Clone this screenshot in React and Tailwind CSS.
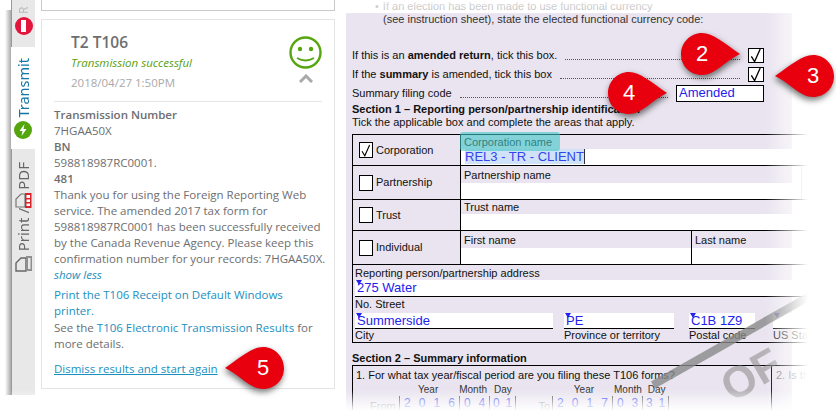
const sans = "font-['Open_Sans',sans-serif]"

function Callout({ n, flip, className }) {
  return (
    <div className={`absolute w-[62px] h-[50px] ${className}`}>
      <svg width="62" height="50" viewBox="0 0 62 50" className={`absolute inset-0 overflow-visible drop-shadow-[1px_3px_3px_rgba(0,0,0,0.55)] ${flip ? '-scale-x-100' : ''}`}>
        <path d="M22 3C33 3 44 13 60 24 C45 31 35 45 22 45 C10 45 1 36 1 24 C1 13 10 3 22 3Z" fill="#e8000f" />
      </svg>
      <span className={`absolute top-[10px] w-[44px] text-center text-[22px] leading-[28px] text-white font-['Liberation_Sans',sans-serif] ${flip ? 'left-[18px]' : 'left-0'}`}>{n}</span>
    </div>
  )
}

function Tick({ className }) {
  return (
    <div className={`border border-black bg-white flex items-center justify-center ${className}`}>
      <svg width="15" height="15" viewBox="0 0 15 15">
        <path d="M2.5 8.5 L6 14 L12 0.5" fill="none" stroke="#000" strokeWidth="1.4" />
      </svg>
    </div>
  )
}

function Marker() {
  return <span className="absolute left-[1px] top-0 border-x-[3px] border-t-[5px] border-x-transparent border-t-[#2222ee]" />
}

function EntityRow({ label, checked, h, children }) {
  return (
    <div className={`flex border-b border-black ${h}`}>
      <div className="w-[108px] shrink-0 flex items-center pl-[6px] gap-[3px] border-r border-black">
        {checked
          ? <Tick className="w-[14px] h-[16px]" />
          : <div className="w-[14px] h-[16px] border border-black bg-white" />}
        <span className="text-[11px] leading-none">{label}</span>
      </div>
      {children}
    </div>
  )
}

function NameCell({ label, labelClass, className = '' }) {
  return (
    <div className={`flex flex-col ${className}`}>
      <div className={`text-[11px] leading-[13px] pl-[3px] ${labelClass}`}>{label}</div>
      <div className="flex-1 bg-white" />
    </div>
  )
}

function Dots() {
  return <span className="flex-1 border-b border-dotted border-[#555] h-[9px]" />
}

function Field({ value, label, w, className = '' }) {
  return (
    <div className={`flex flex-col shrink-0 ${w} ${className}`}>
      <div className="relative h-[16px] bg-white border-b border-black text-[#2222ee] text-[13px] leading-[15px] pl-[2px]">
        <Marker />{value}
      </div>
      <div className="text-[11px] leading-[13px]">{label}</div>
    </div>
  )
}

function DateBox({ digits, w }) {
  return (
    <div className={`relative flex border-l border-[#555] ${w}`}>
      {digits.map((d, i) => (
        <span key={i} className="w-[15px] text-center text-[#3344ee]">{d}</span>
      ))}
    </div>
  )
}

function Tabs() {
  return (
    <div className="w-[24px] shrink-0 flex flex-col bg-[#e8e8e8] border-l border-[#999] h-[395px] items-center text-[#666] text-[14px]">
      <div className="h-[47px] w-full flex flex-col items-center overflow-hidden">
        <span className="h-[14px] text-[#bbb] text-[12px] leading-none [writing-mode:vertical-rl] rotate-180">R</span>
        <div className="mt-[3px] w-[18px] h-[18px] rounded-full bg-[#e2153c] flex items-center justify-center">
          <div className="w-[5px] h-[12px] bg-white" />
        </div>
      </div>
      <div className="h-[102px] w-[25px] -ml-px bg-white flex flex-col items-center justify-end pb-[10px] gap-[3px]">
        <span className="text-[#1577a5] text-[14.5px] leading-none [writing-mode:vertical-rl] rotate-180">Transmit</span>
        <div className="w-[18px] h-[18px] rounded-full bg-[#55a50e] flex items-center justify-center">
          <svg width="10" height="12" viewBox="0 0 10 12"><path d="M6.5 0 L1.5 7 H4.5 L3.5 12 L8.5 5 H5.5Z" fill="#fff" /></svg>
        </div>
      </div>
      <div className="flex flex-col items-center pt-[13px]">
        <span className="leading-none text-[15px] [writing-mode:vertical-rl] rotate-180">PDF</span>
        <svg width="17" height="15" viewBox="0 0 17 15" className="mt-[3px]">
          <path d="M1 14 V6 L6 1 H10 V14Z" fill="none" stroke="#777" strokeWidth="1.2" />
          <rect x="10" y="0" width="6.5" height="15" fill="#d8232a" />
          <rect x="11.5" y="2" width="3.5" height="3" fill="#fff" />
          <rect x="11.5" y="6.5" width="3.5" height="2.5" fill="#fff" />
          <rect x="11.5" y="10.5" width="3.5" height="2.5" fill="#fff" />
        </svg>
        <span className="mt-0 leading-none text-[15px] [writing-mode:vertical-rl] rotate-180">Print /</span>
        <svg width="18" height="17" viewBox="0 0 18 17" className="mt-[4px]">
          <path d="M1 16 V8 L6 3 H11 V16Z" fill="none" stroke="#666" strokeWidth="1.4" />
          <rect x="11" y="1" width="6" height="15" fill="#8f8f8f" />
          <rect x="13" y="3" width="2.5" height="11" fill="#e8e8e8" />
        </svg>
      </div>
    </div>
  )
}

function ResultsPanel() {
  return (
    <div className={`w-[305px] shrink-0 bg-white flex flex-col pl-[6px] pr-[5px] ${sans} text-[#6d6e70] text-[11.5px] leading-[16px]`}>
      <div className="h-[11px] border border-t-0 border-[#c8c8c8]" />
      <div className="mt-[8px] h-[370px] border border-[#e4e4e4] px-[12px] flex flex-col">
        <div className="h-[82px] shrink-0 border-b border-[#e6e6e6] flex justify-between">
          <div className="pl-[17px] pt-[12px]">
            <div className="text-[15.5px] leading-[20px] font-semibold">T2 T106</div>
            <div className="mt-[3px] italic text-[#58a010]">Transmission successful</div>
            <div className="mt-[4px] text-[#a9a9a9] leading-[16px]">2018/04/27 1:50PM</div>
          </div>
          <div className="flex flex-col items-center pt-[16px]">
            <svg width="33" height="33" viewBox="0 0 33 33">
              <circle cx="16.5" cy="16.5" r="15" fill="none" stroke="#55a50e" strokeWidth="2.4" />
              <circle cx="11" cy="13" r="2.2" fill="#55a50e" />
              <circle cx="22" cy="13" r="2.2" fill="#55a50e" />
              <path d="M8 22 Q16.5 27 25 22" fill="none" stroke="#55a50e" strokeWidth="1.8" />
            </svg>
            <svg width="14" height="9" viewBox="0 0 14 9" className="mt-[5px]">
              <path d="M1 8 L7 2 L13 8" fill="none" stroke="#aaa" strokeWidth="3" />
            </svg>
          </div>
        </div>
        <div className="pt-[5px]">
          <div className="font-semibold">Transmission Number</div>
          <div>7HGAA50X</div>
          <div className="font-semibold">BN</div>
          <div>598818987RC0001.</div>
          <div className="font-semibold">481</div>
          <p className="-mr-[8px]">Thank you for using the Foreign Reporting Web service. The amended 2017 tax form for 598818987RC0001 has been successfully received by the Canada Revenue Agency. Please keep this confirmation number for your records: 7HGAA50X.</p>
          <div className="italic text-[#1b8fc0]">show less</div>
          <p className="mt-[4px] text-[#1b8fc0]">Print the T106 Receipt on Default Windows printer.</p>
          <p className="mt-[1px]">See the <span className="text-[#1b8fc0]">T106 Electronic Transmission Results</span> for more details.</p>
          <div className="mt-[9px] text-[#1b8fc0] underline">Dismiss results and start again</div>
        </div>
      </div>
    </div>
  )
}

function FormPanel() {
  return (
    <div className="ml-[6px] w-[462px] shrink-0 h-[411px] overflow-hidden font-['Liberation_Sans',sans-serif] text-[#111] text-[11px] leading-[13px] flex flex-col">
      <div className="h-[13px] shrink-0 pl-[29px] text-[#aaa] flex gap-[4px]">
        <span>•</span><span>If an election has been made to use functional currency</span>
      </div>
      <div className="flex-1 w-[446px] bg-[#e9e4ef] pl-[6px] flex flex-col">
        <div className="pl-[31px] h-[33px] text-[#333]">(see instruction sheet), state the elected functional currency code:</div>
        <div className="w-[412px] flex items-center gap-[8px] h-[19px] whitespace-nowrap">
          <span>If this is an <b>amended return</b>, tick this box.</span><Dots />
          <Tick className="w-[16px] h-[15px] shrink-0" />
        </div>
        <div className="w-[412px] flex items-center gap-[8px] h-[19px] whitespace-nowrap">
          <span>If the <b>summary</b> is amended, tick this box</span><Dots />
          <Tick className="w-[16px] h-[15px] shrink-0" />
        </div>
        <div className="w-[412px] flex items-center gap-[8px] h-[19px] whitespace-nowrap">
          <span>Summary filing code</span><Dots />
          <div className="w-[88px] h-[17px] border border-black bg-white text-[#2222ee] text-[13px] leading-[14px] pl-[2px] shrink-0">Amended</div>
        </div>
        <div className="font-bold h-[13px] leading-[13px]">Section 1 – Reporting person/partnership identification</div>
        <div className="h-[18px]">Tick the applicable box and complete the areas that apply.</div>
        <div className="w-[456px] shrink-0 border border-black border-r-0 flex flex-col h-[209px]">
          <EntityRow label="Corporation" checked h="h-[31px]">
            <div className="relative flex-1 flex flex-col">
              <div className="text-[11px] h-[14px] pl-[3px] pt-[1px]">Corporation name</div>
              <div className="flex-1 bg-white pl-[4px] text-[#3344ee] text-[13px] leading-[16px]">
                <span className="bg-[#cfe2f7]">REL3 - TR - CLIENT</span><span className="border-l border-[#333]" />
              </div>
              <div className="absolute left-[-1px] top-[-3px] w-[100px] h-[19px] rounded-[3px] bg-[#3fc6c6]/60" />
            </div>
          </EntityRow>
          <EntityRow label="Partnership" h="h-[34px]">
            <NameCell label="Partnership name" labelClass="h-[17px] pt-[3px]" className="w-[341px] border-r border-[#aaa]" />
          </EntityRow>
          <EntityRow label="Trust" h="h-[31px]">
            <NameCell label="Trust name" labelClass="h-[14px] pt-[1px]" className="flex-1" />
          </EntityRow>
          <EntityRow label="Individual" h="h-[34px]">
            <NameCell label="First name" labelClass="h-[17px] pt-[3px]" className="w-[231px] shrink-0 border-r border-black" />
            <NameCell label="Last name" labelClass="h-[17px] pt-[3px]" className="flex-1" />
          </EntityRow>
          <div className="flex-1 flex flex-col pl-[2px] pt-[2px]">
            <div className="h-[13px]">Reporting person/partnership address</div>
            <div className="relative h-[17px] bg-white border-b border-black text-[#2222ee] text-[13px] leading-[16px] pl-[2px]"><Marker />275 Water</div>
            <div className="h-[14px] leading-[14px]">No. Street</div>
            <div className="flex mt-[2px]">
              <Field value="Summerside" label="City" w="w-[198px]" />
              <Field value="PE" label="Province or territory" w="w-[110px]" className="ml-[11px]" />
              <Field value="C1B 1Z9" label="Postal code" w="w-[66px]" className="ml-[15px]" />
              <Field value="" label="US State" w="w-[60px]" className="ml-[18px]" />
            </div>
          </div>
        </div>
        <div className="font-bold h-[22px] pt-[9px] leading-[13px] shrink-0">Section 2 – Summary information</div>
        <div className="w-[456px] flex-1 border border-black border-b-0 border-r-0 flex">
          <div className="w-[419px] shrink-0 border-r border-black pl-[3px] pt-[3px]">
            <div>1. For what tax year/fiscal period are you filing these T106 forms?</div>
            <div className="flex text-[10px] leading-[12px] mt-[2px] pl-[62px] text-[#333]">
              <span>Year</span><span className="ml-[21px]">Month</span><span className="ml-[7px]">Day</span>
              <span className="ml-[62px]">Year</span><span className="ml-[20px]">Month</span><span className="ml-[6px]">Day</span>
            </div>
            <div className="flex text-[12px] leading-[14px] pl-[14px] text-[#888]">
              <span className="w-[29px] text-[11px] pt-[3px]">From</span>
              <DateBox digits={['2', '0', '1', '6']} w="w-[60px]" />
              <DateBox digits={['0', '4']} w="w-[30px]" />
              <DateBox digits={['0', '1']} w="w-[27px] border-r" />
              <span className="w-[36px] text-[11px] text-right pr-[2px] pt-[3px]">To</span>
              <DateBox digits={['2', '0', '1', '7']} w="w-[60px]" />
              <DateBox digits={['0', '3']} w="w-[30px]" />
              <DateBox digits={['3', '1']} w="w-[27px] border-r" />
            </div>
          </div>
          <div className="pl-[4px] pt-[3px] text-[#777] whitespace-nowrap">2. Is the</div>
        </div>
      </div>
    </div>
  )
}

export default function App() {
  return (
    <div className="relative w-[836px] h-[411px] overflow-hidden bg-white">
      <div className="flex pl-[11px]">
        <Tabs />
        <ResultsPanel />
        <FormPanel />
      </div>

      {/* watermark */}
      <svg width="200" height="130" viewBox="0 0 200 130" className="absolute left-[640px] top-[281px]">
        <path d="M13 104 L170 15" stroke="#8a8a8a" strokeWidth="8" opacity="0.8" />
        <text x="92" y="122" fontSize="44" fontWeight="700" fill="#8a8a8a" opacity="0.55" fontFamily="Liberation Sans" transform="rotate(-30 92 122)">OF</text>
      </svg>

      {/* fades */}
      <div className="absolute left-[765px] top-0 w-[43px] h-full bg-gradient-to-r from-white/0 to-white" />
      <div className="absolute left-[808px] top-0 w-[28px] h-full bg-white" />
      <div className="absolute left-0 top-[390px] w-full h-[21px] bg-gradient-to-b from-white/0 to-white" />
      <div className="absolute left-[346px] top-0 w-[490px] h-[14px] bg-gradient-to-b from-white/70 to-white/10" />
      <div className="absolute left-[5px] top-[10px] w-[6px] h-[385px] bg-gradient-to-r from-white to-[#aaa]" />

      <Callout n="2" className="left-[680px] top-[30px]" />
      <Callout n="3" flip className="left-[773px] top-[52px]" />
      <Callout n="4" className="left-[607px] top-[69px]" />
      <Callout n="5" flip className="left-[223px] top-[344px]" />
    </div>
  )
}
